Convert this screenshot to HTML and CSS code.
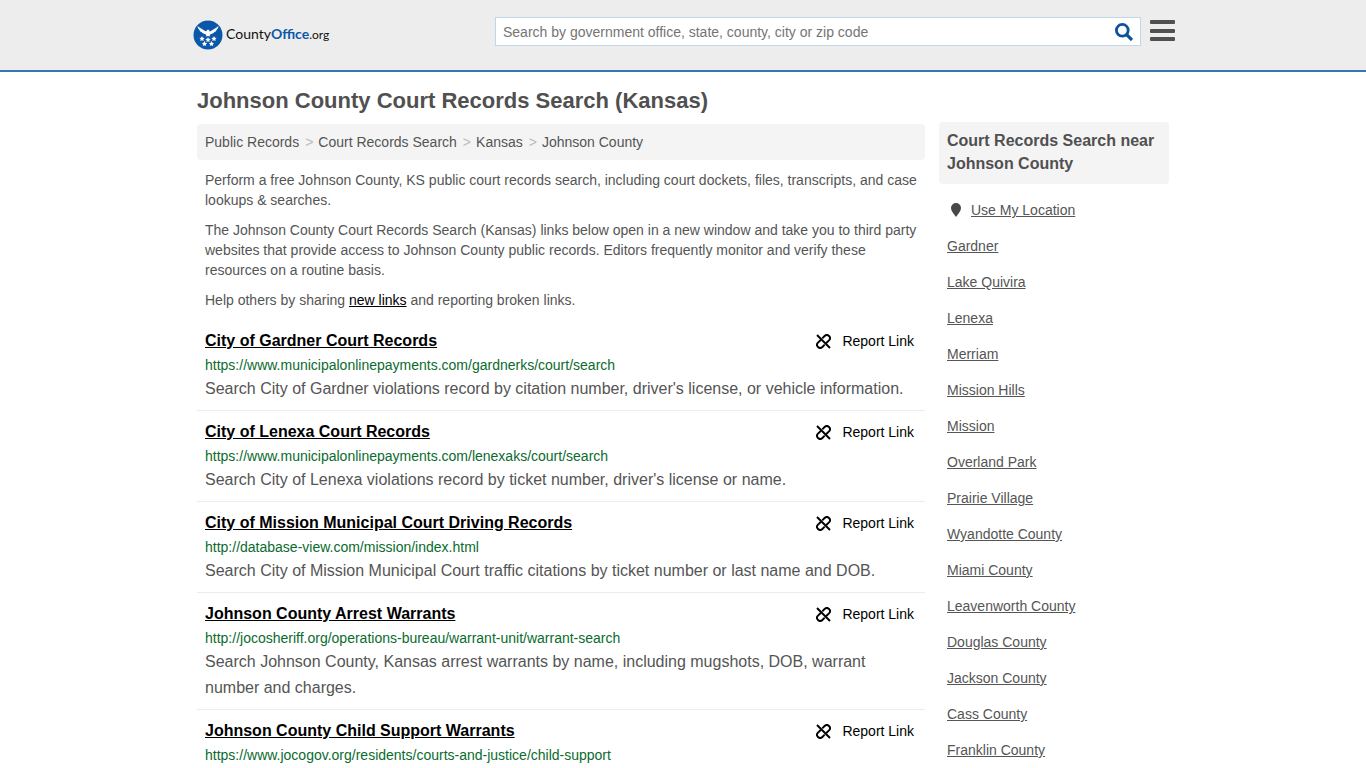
FILE: index.html
```html
<!DOCTYPE html>
<html lang="en">
<head>
<meta charset="utf-8">
<meta name="viewport" content="width=device-width, initial-scale=1">
<title>Johnson County Court Records Search (Kansas)</title>
<link rel="stylesheet" href="styles.css">
</head>
<body>
<svg class="sprite" aria-hidden="true">
  <symbol id="unlink" viewBox="0 0 15 15">
    <g fill="none" stroke="#000" stroke-width="1.900">
      <path d="M1 1 14 14"/>
      <path d="M6.300 4.300 8.600 2a3.100 3.100 0 0 1 4.400 4.400L10 9.300"/>
      <path d="M8.700 10.700 6.400 13A3.100 3.100 0 0 1 2 8.600L5 5.700"/>
    </g>
  </symbol>
</svg>
<header class="site-header">
  <div class="container header-row">
    <a class="logo" href="#">
      <svg class="logo-mark" viewBox="0 0 30 30" aria-hidden="true">
        <circle cx="15" cy="15" r="14.5" fill="#0b57a8"/>
        <path fill="#fff" d="M4.500 6c2.500 2.300 5.500 3.200 8 5.300l1-.3c.3-1.300 1.800-1.700 3-.8l-.6 1 1.600.1c2.500-2.100 5.500-3 8-5.300-.1 1.600-.8 2.800-1.800 3.500-.3 1.300-1.100 2.200-2.200 2.600-.8 1.200-2 1.800-3.400 1.900L16.500 15l.8 1.500L15 16l-2.300.5.800-1.500-1.600-1c-1.400-.1-2.600-.7-3.400-1.900-1.100-.4-1.900-1.300-2.200-2.600C5.300 8.800 4.600 7.600 4.500 6z"/>
        <g fill="#fff">
          <path id="star" d="m9 16 .8 1.700 1.900.2-1.400 1.300.4 1.900L9 20.200l-1.700.9.400-1.900-1.400-1.300 1.900-.2z"/>
          <use href="#star" x="6" y="1"/>
          <use href="#star" x="12"/>
          <use href="#star" x="2.500" y="5"/>
          <use href="#star" x="9.500" y="5"/>
        </g>
      </svg>
      <span class="logo-text">County<b>Office</b><span class="logo-tld">.org</span></span>
    </a>
    <div class="header-tools">
      <form class="search">
        <input class="search-input" type="text" aria-label="Search" placeholder="Search by government office, state, county, city or zip code">
        <button class="search-button" type="submit" aria-label="Search">
          <svg viewBox="0 0 18 18" width="18" height="18" aria-hidden="true"><g fill="none" stroke="#0b519c"><circle cx="7.300" cy="7.300" r="5.900" stroke-width="2.800"/><path d="m11.600 11.600 5.400 5.400" stroke-width="3.200"/></g></svg>
        </button>
      </form>
      <button class="menu-button" type="button" aria-label="Menu">
        <svg viewBox="0 0 25 22" width="25" height="22" aria-hidden="true"><g fill="#505050"><rect y="0" width="25" height="4" rx="1"/><rect y="9" width="25" height="4" rx="1"/><rect y="17" width="25" height="4" rx="1"/></g></svg>
      </button>
    </div>
  </div>
</header>

<div class="container">
  <h1 class="page-title">Johnson County Court Records Search (Kansas)</h1>
  <div class="columns">
    <main class="main">
      <nav class="breadcrumb" aria-label="Breadcrumb">
        <a href="#">Public Records</a><span class="sep">&gt;</span><a href="#">Court Records Search</a><span class="sep">&gt;</span><a href="#">Kansas</a><span class="sep">&gt;</span><a href="#">Johnson County</a>
      </nav>
      <div class="intro">
        <p>Perform a free Johnson County, KS public court records search, including court dockets, files, transcripts, and case lookups &amp; searches.</p>
        <p>The Johnson County Court Records Search (Kansas) links below open in a new window and take you to third party websites that provide access to Johnson County public records. Editors frequently monitor and verify these resources on a routine basis.</p>
        <p>Help others by sharing <a href="#">new links</a> and reporting broken links.</p>
      </div>
      <div class="records">
        <article class="record">
          <div class="record-head"><a class="record-title" href="#">City of Gardner Court Records</a><button class="report" type="button"><svg class="report-icon" aria-hidden="true"><use href="#unlink"/></svg>Report Link</button></div>
          <div class="record-url">https://www.municipalonlinepayments.com/gardnerks/court/search</div>
          <p class="record-desc">Search City of Gardner violations record by citation number, driver's license, or vehicle information.</p>
        </article>
        <article class="record">
          <div class="record-head"><a class="record-title" href="#">City of Lenexa Court Records</a><button class="report" type="button"><svg class="report-icon" aria-hidden="true"><use href="#unlink"/></svg>Report Link</button></div>
          <div class="record-url">https://www.municipalonlinepayments.com/lenexaks/court/search</div>
          <p class="record-desc">Search City of Lenexa violations record by ticket number, driver's license or name.</p>
        </article>
        <article class="record">
          <div class="record-head"><a class="record-title" href="#">City of Mission Municipal Court Driving Records</a><button class="report" type="button"><svg class="report-icon" aria-hidden="true"><use href="#unlink"/></svg>Report Link</button></div>
          <div class="record-url">http://database-view.com/mission/index.html</div>
          <p class="record-desc">Search City of Mission Municipal Court traffic citations by ticket number or last name and DOB.</p>
        </article>
        <article class="record">
          <div class="record-head"><a class="record-title" href="#">Johnson County Arrest Warrants</a><button class="report" type="button"><svg class="report-icon" aria-hidden="true"><use href="#unlink"/></svg>Report Link</button></div>
          <div class="record-url">http://jocosheriff.org/operations-bureau/warrant-unit/warrant-search</div>
          <p class="record-desc">Search Johnson County, Kansas arrest warrants by name, including mugshots, DOB, warrant number and charges.</p>
        </article>
        <article class="record">
          <div class="record-head"><a class="record-title" href="#">Johnson County Child Support Warrants</a><button class="report" type="button"><svg class="report-icon" aria-hidden="true"><use href="#unlink"/></svg>Report Link</button></div>
          <div class="record-url">https://www.jocogov.org/residents/courts-and-justice/child-support</div>
        </article>
      </div>
    </main>
    <aside class="sidebar">
      <h2 class="sidebar-title">Court Records Search near Johnson County</h2>
      <ul class="places">
        <li><svg class="pin" viewBox="0 0 10 14" aria-hidden="true"><path fill="#484848" d="M5 0a5 5 0 0 1 5 5c0 3-2.500 5.500-5 9C2.500 10.500 0 8 0 5a5 5 0 0 1 5-5z"/></svg><a href="#">Use My Location</a></li>
        <li><a href="#">Gardner</a></li>
        <li><a href="#">Lake Quivira</a></li>
        <li><a href="#">Lenexa</a></li>
        <li><a href="#">Merriam</a></li>
        <li><a href="#">Mission Hills</a></li>
        <li><a href="#">Mission</a></li>
        <li><a href="#">Overland Park</a></li>
        <li><a href="#">Prairie Village</a></li>
        <li><a href="#">Wyandotte County</a></li>
        <li><a href="#">Miami County</a></li>
        <li><a href="#">Leavenworth County</a></li>
        <li><a href="#">Douglas County</a></li>
        <li><a href="#">Jackson County</a></li>
        <li><a href="#">Cass County</a></li>
        <li><a href="#">Franklin County</a></li>
      </ul>
    </aside>
  </div>
</div>
</body>
</html>
```
FILE: styles.css
```css
* { box-sizing: border-box; }

body {
  margin: 0;
  background: #fff;
  color: #555;
  font-family: "Liberation Sans", Arial, sans-serif;
  font-size: 14px;
  line-height: 20px;
}

a { color: inherit; }
button { border: 0; padding: 0; background: none; font: inherit; cursor: pointer; }
.sprite { display: none; }

.container {
  max-width: 988px;
  margin: 0 auto;
  padding: 0 8px;
}

.site-header {
  background: #ededed;
  border-bottom: 2px solid #3578b5;
}

.header-row {
  display: flex;
  align-items: flex-start;
  justify-content: space-between;
  padding: 17px 2px 18px 4px;
}

.logo {
  display: flex;
  align-items: center;
  gap: 3px;
  height: 35px;
  color: #111;
  text-decoration: none;
}
.logo-mark { width: 30px; height: 30px; }
.logo-text { font-family: Lato, "Liberation Sans", sans-serif; font-size: 14px; }
.logo-text b { color: #0b57a8; }
.logo-tld { font-size: 12px; }

.header-tools {
  display: flex;
  flex: 0 1 680px;
  gap: 9px;
}
.search {
  display: flex;
  flex: 1;
  height: 29px;
  background: #fff;
  border: 1px solid #bfd7e9;
}
.search-input {
  flex: 1;
  min-width: 0;
  border: 0;
  outline: 0;
  padding: 0 7px;
  background: transparent;
  font: inherit;
}
.search-input::placeholder { color: #757575; opacity: 1; }
.search-button { display: flex; align-items: center; justify-content: center; width: 32px; }
.menu-button { display: flex; padding-top: 3px; height: 29px; }

.page-title {
  margin: 17px 0 9px;
  color: #505050;
  font-size: 22px;
  line-height: 24px;
}

.columns {
  display: flex;
  align-items: flex-start;
  gap: 14px;
}
.main { flex: 1; min-width: 0; padding-top: 2px; }
.sidebar { flex: 0 0 230px; }

.breadcrumb {
  display: flex;
  flex-wrap: wrap;
  padding: 8px;
  background: #f4f4f4;
  border-radius: 4px;
}
.breadcrumb a { text-decoration: none; }
.sep { padding: 0 5px 0 6px; color: #bbb; }

.intro { padding: 0 8px; }
.intro p { margin: 10px 0; }
.intro a { color: #000; }

.record {
  padding: 8px;
  border-bottom: 1px solid #ececec;
}
.record:last-child { padding-bottom: 0; border-bottom: 0; }
.record-head {
  display: flex;
  align-items: center;
  justify-content: space-between;
  padding-right: 3px;
}
.record-title {
  color: #000;
  font-size: 16px;
  font-weight: bold;
  line-height: 26px;
}
.report { display: flex; align-items: center; gap: 11px; color: #000; }
.report-icon { width: 15px; height: 15px; }
.record-url { color: #0a6b2d; line-height: 22px; }
.record-desc { margin: 0; font-size: 16px; line-height: 26px; }

.sidebar-title {
  margin: 0;
  padding: 7px 8px 9px;
  background: #f4f4f4;
  border-radius: 4px;
  color: #505050;
  font-size: 16px;
  line-height: 23px;
}
.places { margin: 8px 0 0; padding: 0; list-style: none; }
.places li { display: flex; align-items: center; height: 36px; padding: 0 8px; }
.pin { width: 10px; height: 14px; margin: 0 10px 0 4px; }
```
